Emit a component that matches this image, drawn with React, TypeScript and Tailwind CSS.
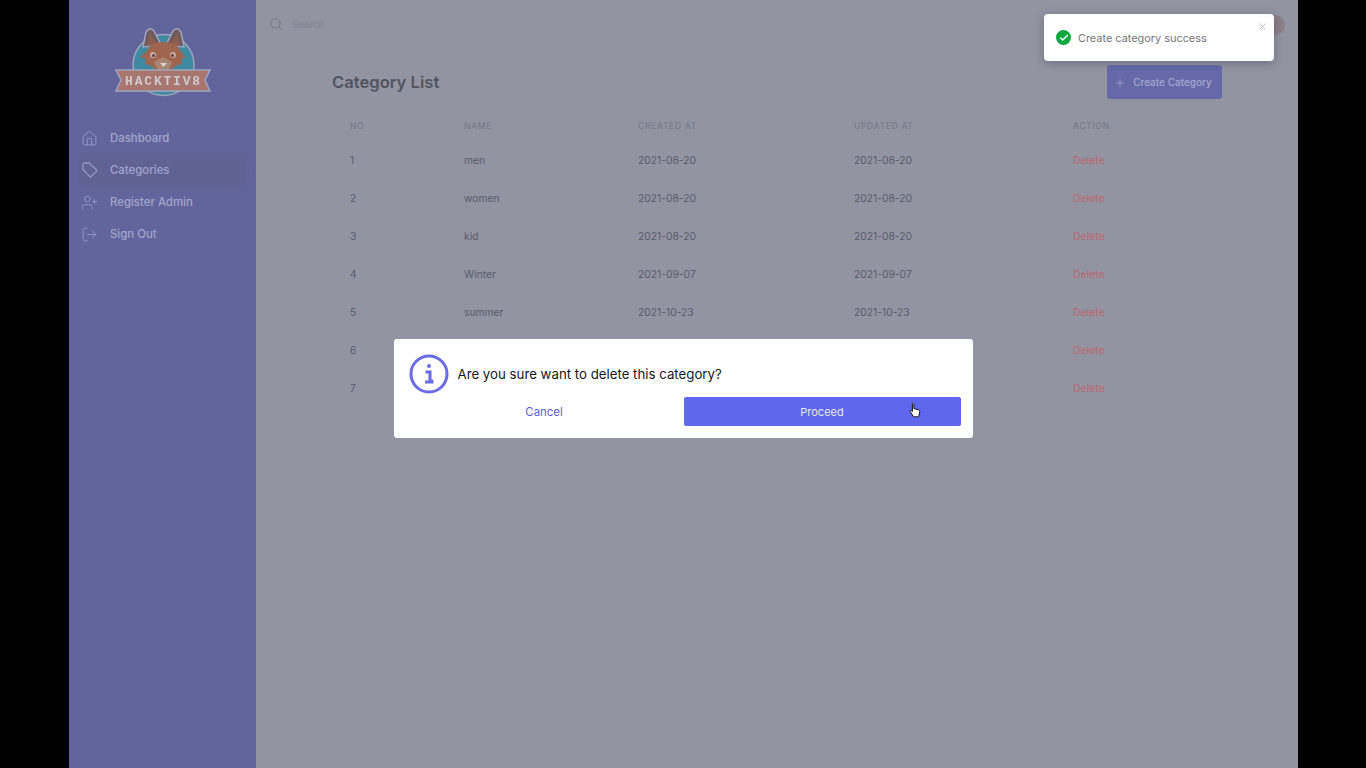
import { Home, UserPlus, LogOut, Search, Plus, X, Check } from "lucide-react";

const FONT = "font-['Inter','Liberation_Sans',sans-serif]";

function TagOutline({ size = 17, strokeWidth = 1.3, className = "" }: { size?: number; strokeWidth?: number; className?: string }) {
  return (
    <svg width={size} height={size} viewBox="0 0 17 17" fill="none" stroke="currentColor" strokeWidth={strokeWidth} className={className}>
      <path d="M3.5 1 H8 L15.5 7.8 Q16.1 8.5 15.5 9.2 L10 14.5 Q9.3 15 8.6 14.4 L2.4 8 Q1.6 7.2 1.7 6 L2 2.5 Q2.1 1.2 3.5 1 Z" />
    </svg>
  );
}

const NAV_ITEMS = [
  { label: "Dashboard", icon: Home },
  { label: "Categories", icon: TagOutline, active: true },
  { label: "Register Admin", icon: UserPlus },
  { label: "Sign Out", icon: LogOut },
];

const ROWS = [
  { no: 1, name: "men", created: "2021-08-20", updated: "2021-08-20" },
  { no: 2, name: "women", created: "2021-08-20", updated: "2021-08-20" },
  { no: 3, name: "kid", created: "2021-08-20", updated: "2021-08-20" },
  { no: 4, name: "Winter", created: "2021-09-07", updated: "2021-09-07" },
  { no: 5, name: "summer", created: "2021-10-23", updated: "2021-10-23" },
  // names and dates of these two sit behind the dialog
  { no: 6, name: "", created: "", updated: "" },
  { no: 7, name: "", created: "", updated: "" },
];

const COLUMNS = "grid grid-cols-[114px_174px_216px_219px_1fr] items-center";

function Logo() {
  return (
    <svg width="96" height="72" viewBox="0 0 96 72" className="block blur-[0.4px]">
      <circle cx="48.5" cy="39" r="30.5" fill="#3f8aa0" stroke="#a3a5c0" strokeWidth="1.5" />
      <path d="M28 21 L31 6 Q35 0 39 5 L46 19 Z M69 21 L66 6 Q62 0 58 5 L51 19 Z" fill="#6f5a5c" stroke="#a3a5c0" strokeWidth="1.5" />
      <path d="M32 19 L35 7 L42 19 Z M65 19 L62 7 L55 19 Z" fill="#8a5f52" />
      <path d="M36 18 Q48 14 61 18 L66 26 L71 31 L66 33 L67 38 L60 40 L55 46 L48 49 L42 46 L37 40 L30 38 L31 33 L25 31 L31 26 Z" fill="#a0654f" />
      <path d="M39 36 L48 31 L57 36 L53 45 L48 48 L43 45 Z" fill="#a98573" />
      <circle cx="38" cy="29" r="3" fill="#c9a9a0" />
      <circle cx="58" cy="29" r="3" fill="#c9a9a0" />
      <circle cx="38.5" cy="29.5" r="1.5" fill="#5e3d3c" />
      <circle cx="57.5" cy="29.5" r="1.5" fill="#5e3d3c" />
      <path d="M45 37 H52 L48.5 41 Z" fill="#e0d0d0" />
      <path d="M1 44 H95 L90 54 L95 65 H1 L6 54 Z" fill="#a9766f" stroke="#a3a5c0" strokeWidth="1.5" />
      <text x="48.5" y="59" textAnchor="middle" fontSize="13" fontWeight="700" letterSpacing="1.8" fill="#cfc9cf" fontFamily="'Liberation Mono', monospace">
        HACKTIV8
      </text>
    </svg>
  );
}

function Sidebar() {
  return (
    <aside className="w-[187px] shrink-0 bg-[#62659b]">
      <div className="flex justify-center pt-[26px]">
        <Logo />
      </div>
      <nav className="mt-[24px] flex flex-col">
        {NAV_ITEMS.map(({ label, icon: Icon, active }) => (
          <div
            key={label}
            className={`flex h-8 items-center gap-[12px] text-[11.4px] font-medium text-[#a2a5cc] ${active ? "ml-[11px] mr-[10px] rounded-sm bg-[#606294] pl-[1px] shadow-[0_0_6px_#606294]" : "pl-[12px]"}`}
          >
            <Icon size={17} strokeWidth={1.3} className="shrink-0 text-[#9598c6]" />
            <span className="pt-[1px]">{label}</span>
          </div>
        ))}
      </nav>
    </aside>
  );
}

function CategoryTable() {
  return (
    <div className="mt-[17px] pl-[18px]">
      <div className={`${COLUMNS} h-[20px] text-[8.5px] font-medium tracking-[0.08em] text-[#777a88]`}>
        <span>NO</span>
        <span>NAME</span>
        <span>CREATED AT</span>
        <span>UPDATED AT</span>
        <span>ACTION</span>
      </div>
      <div className="mt-[6px]">
        {ROWS.map((row) => (
          <div key={row.no} className={`${COLUMNS} h-[38px] text-[10.3px] text-[#575b69]`}>
            <span>{row.no}</span>
            <span>{row.name}</span>
            <span>{row.created}</span>
            <span>{row.updated}</span>
            <span className="text-[10.5px] text-[#bd6670]">Delete</span>
          </div>
        ))}
      </div>
    </div>
  );
}

function Toast() {
  return (
    <div className="absolute right-[24px] top-[14px] flex h-[47px] w-[230px] items-start rounded-sm bg-white pl-[12px] shadow-[0_2px_8px_rgba(40,40,60,0.35)]">
      <span className="mt-[16px] flex h-[15px] w-[15px] items-center justify-center rounded-full bg-[#0aa83f]">
        <Check size={10} strokeWidth={3.5} className="text-white" />
      </span>
      <span className="ml-[7px] mt-[17px] text-[10.9px] leading-[15px] text-[#757575]">Create category success</span>
      <X size={11} strokeWidth={1.6} className="absolute right-[6px] top-[7px] text-[#a9a9a9]" />
    </div>
  );
}

function HandCursor() {
  return (
    <svg width="12" height="15" viewBox="0 0 12 15" className="absolute left-[225px] top-[6px]">
      <path
        d="M3.4 1.2 C3.4.4 4.9.4 4.9 1.2 V5.6 L9.6 6.8 C10.7 7.2 10.9 8 10.7 9 L10 12.4 C9.9 13.2 9.4 13.8 8.6 13.8 H5.4 C4.8 13.8 4.4 13.5 4.1 13 L1.2 8.6 C.7 7.8 1.8 7 2.5 7.6 L3.4 8.6 Z"
        fill="#fff"
        stroke="#111"
        strokeWidth="1"
      />
    </svg>
  );
}

function ConfirmDialog() {
  return (
    <div className="fixed inset-0 flex justify-center pt-[339px]">
      <div className="h-[99px] w-[579px] rounded-[3px] bg-white pl-[15px] pr-[12px] pt-[15px]">
        <div className="flex items-center gap-[9px]">
          <svg width="40" height="40" viewBox="0 0 40 40" className="shrink-0">
            <circle cx="20" cy="20" r="18" fill="none" stroke="#6a6be6" strokeWidth="3" />
            <circle cx="20" cy="12" r="2" fill="#6a6be6" />
            <path d="M16.5 18 H21 V27 H24 M16 28 H24.5" fill="none" stroke="#6a6be6" strokeWidth="3" />
          </svg>
          <span className="pt-[1px] text-[13.25px] text-[#16161a]">Are you sure want to delete this category?</span>
        </div>
        <div className="mt-[3px] flex items-center">
          <button className="mr-[4px] h-[29px] w-[271px] pt-[2px] text-[11.4px] text-[#5b5bd6]">Cancel</button>
          <button className="relative h-[29px] w-[277px] rounded-[2px] bg-[#5f68ec] pt-[1px] text-[11px] text-[#e8eafc]">
            Proceed
            <HandCursor />
          </button>
        </div>
      </div>
    </div>
  );
}

export default function App() {
  return (
    <div className={`${FONT} relative flex h-screen overflow-hidden bg-black pl-[69px] pr-[68px]`}>
      <Sidebar />
      <main className="relative flex-1 bg-[#9294a1]">
        <div className="flex h-[48px] items-center gap-[9px] pl-[13px] text-[9.6px] text-[#7f8290]">
          <Search size={14} strokeWidth={1.7} className="text-[#707382]" />
          <span className="pt-[2px]">Search</span>
        </div>
        <div className="pl-[76px] pr-[76px] pt-[17px]">
          <div className="flex items-center justify-between">
            <h1 className="text-[16.6px] font-semibold text-[#51545f]">Category List</h1>
            <button className="flex h-[34px] w-[115px] items-center justify-center gap-[7px] rounded-[3px] bg-[#6669a8] pr-[3px] pt-[1px] text-[10px] font-medium text-[#a4a7cf]">
              <Plus size={12} strokeWidth={1.5} />
              Create Category
            </button>
          </div>
          <CategoryTable />
        </div>
        <div className="absolute right-[13px] top-[15px] h-[20px] w-[20px] rounded-full bg-[#8b8088]" />
        <Toast />
      </main>
      <ConfirmDialog />
    </div>
  );
}
